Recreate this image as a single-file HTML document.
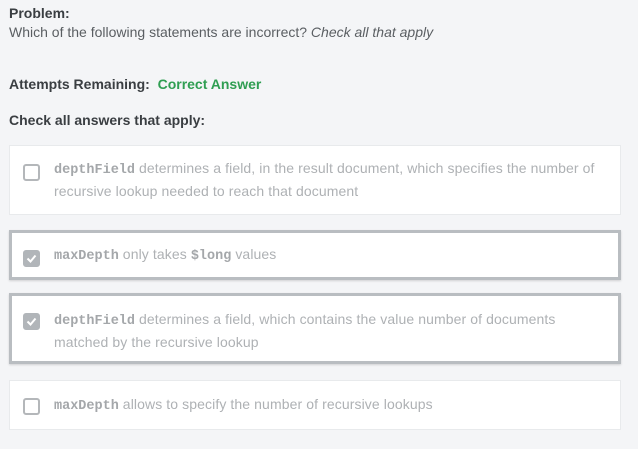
<!DOCTYPE html>
<html><head><style>
*{margin:0;padding:0;box-sizing:border-box}
body{width:638px;height:449px;background:#f4f5f7;font-family:"Liberation Sans",sans-serif;position:relative;overflow:hidden;color:#3d4145}
.a{position:absolute;white-space:nowrap}
.b{font-weight:bold;font-size:14px;color:#3a3e42}
.card{position:absolute;left:9px;width:612px;background:#fff;border:1px solid #e8eaec}
.sel{border:3px solid #b9bdc1;box-shadow:0 1px 2px rgba(0,0,0,.15)}
.cb{position:absolute;left:23px;width:17px;height:17px;border:2px solid #b4b7ba;border-radius:3px;background:#fff}
.cb.on{background:#b1b5b9;border-color:#b1b5b9}
.t{position:absolute;left:54px;font-size:14px;line-height:21px;color:#aeb1b4;white-space:nowrap;letter-spacing:0.1px}
code{font-family:"Liberation Mono",monospace;font-weight:bold;color:#a4a7aa;font-size:13.5px;letter-spacing:0}
</style></head><body>
<div class="a b" style="left:9px;top:5px">Problem:</div>
<div class="a" style="left:9px;top:24px;font-size:14px;color:#5a5e62">Which of the following statements are incorrect? <i>Check all that apply</i></div>
<div class="a b" style="left:9px;top:76px">Attempts Remaining:&nbsp; <span style="color:#2f9e52">Correct Answer</span></div>
<div class="a b" style="left:9px;top:112px">Check all answers that apply:</div>

<div class="card" style="top:145px;height:70px"></div>
<div class="cb" style="top:164px"></div>
<div class="t" style="top:158px"><code>depthField</code> determines a field, in the result document, which specifies the number of<br>recursive lookup needed to reach that document</div>

<div class="card sel" style="top:230px;height:50px"></div>
<div class="cb on" style="top:250px"><svg width="13" height="13" viewBox="0 0 13 13" style="position:absolute;left:0;top:0"><path d="M2.5 6.5l3 3 5-6" stroke="#fff" stroke-width="2" fill="none"/></svg></div>
<div class="t" style="top:244px"><code>maxDepth</code> only takes <code>$long</code> values</div>

<div class="card sel" style="top:293px;height:71px"></div>
<div class="cb on" style="top:313px"><svg width="13" height="13" viewBox="0 0 13 13" style="position:absolute;left:0;top:0"><path d="M2.5 6.5l3 3 5-6" stroke="#fff" stroke-width="2" fill="none"/></svg></div>
<div class="t" style="top:309px"><code>depthField</code> determines a field, which contains the value number of documents<br>matched by the recursive lookup</div>

<div class="card" style="top:380px;height:50px"></div>
<div class="cb" style="top:398px"></div>
<div class="t" style="top:394px"><code>maxDepth</code> allows to specify the number of recursive lookups</div>
</body></html>
